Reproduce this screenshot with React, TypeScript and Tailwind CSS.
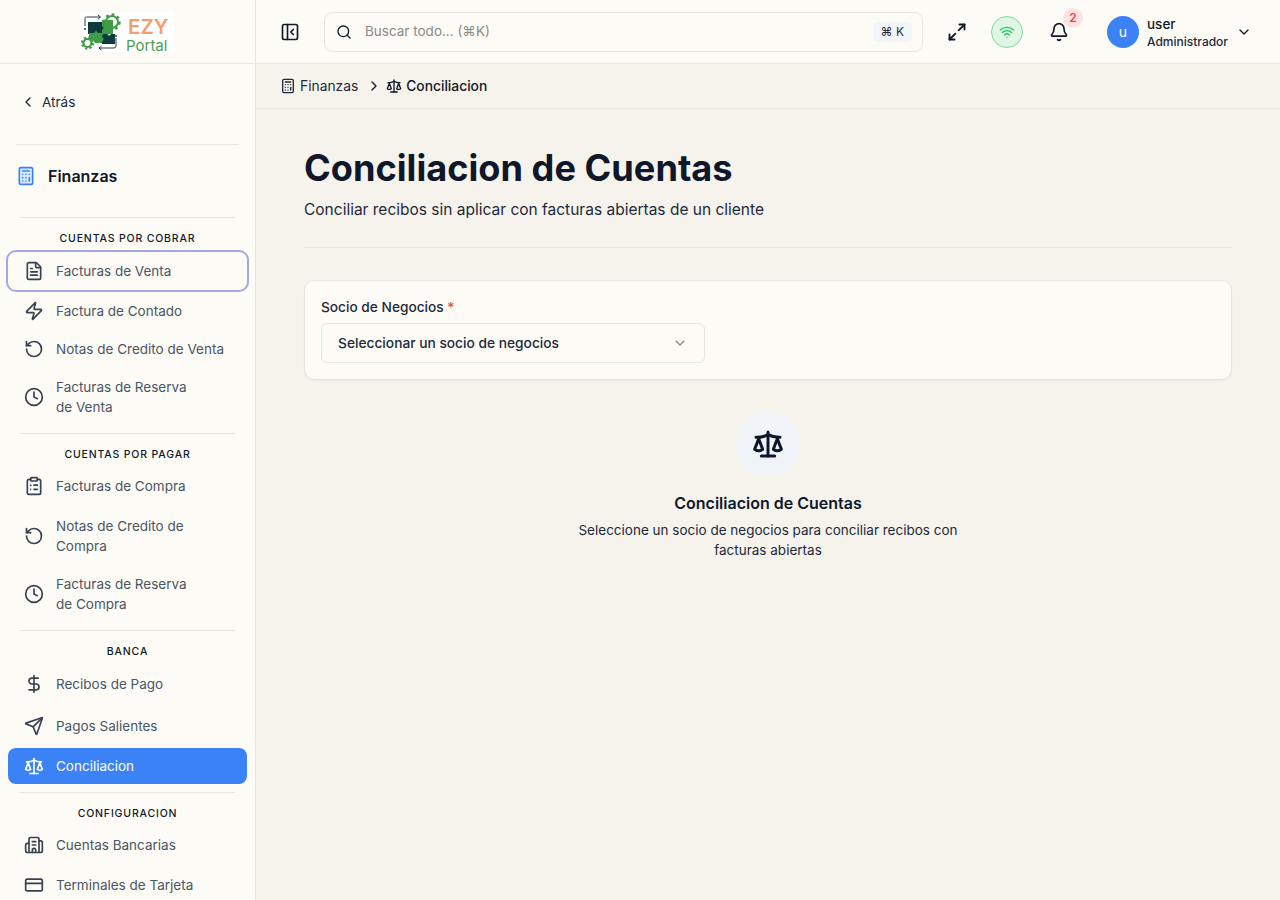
import {
  Bell, Building2, Calculator, ChevronDown, ChevronLeft, ChevronRight, ClipboardList, Clock, CreditCard,
  DollarSign, FileText, Maximize2, PanelLeftClose, RotateCcw, Scale, Search, Send, Wifi, Zap,
} from "lucide-react";

function Logo() {
  const dark = "#0f3b3e";
  const green = "#3f9c46";
  return (
    <div className="flex h-10 w-[94px] items-start bg-white">
      <svg width="46" height="40" viewBox="0 0 46 40" className="shrink-0">
        <g fill="none" stroke="#24403f" strokeWidth="1">
          <path d="M5 14V6.5Q5 5 6.5 5H20M18 3l2.5 2-2.5 2" />
          <path d="M36 26V34Q36 36 34 36H19M21.5 34l-2.5 2 2.5 2" />
        </g>
        <path d="M8 10H23V14Q26 16 23 18V22H18Q16 19 14 22H8Z" fill={dark} />
        <path d="M20 8H33V22H29Q27 25 25 22H22V18Q25 16 22 14V8Z" fill={green} />
        <path d="M9 21H14Q16 17 18 21H23V26Q26 28 23 31H15Q13 27 11 28H9Z" fill={green} />
        <path d="M23 22H27Q29 25 31 22H35V32H22V30Q25 27 22 25Z" fill={dark} />
        <circle cx="32" cy="10" r="6" fill="none" stroke={green} strokeWidth="2" />
        <circle cx="32" cy="10" r="7.5" fill="none" stroke={green} strokeWidth="2.5" strokeDasharray="2.6 3.2" />
        <circle cx="7.5" cy="31" r="4" fill="none" stroke={green} strokeWidth="2.2" />
        <circle cx="7.5" cy="31" r="5.6" fill="none" stroke={green} strokeWidth="2" strokeDasharray="2.2 2.2" />
        <circle cx="36" cy="24" r="1" fill="#24403f" />
        <circle cx="5" cy="17" r="1" fill="#24403f" />
      </svg>
      <div className="flex flex-col pt-[7.5px] font-['Inter',sans-serif]">
        <span className="ml-[2px] text-[20.5px] font-semibold leading-[16px] text-[#ef9f70]">EZY</span>
        <span className="mt-[3.5px] text-[15px] leading-[13px] text-[#4f9d55]">Portal</span>
      </div>
    </div>
  );
}

function Item({ icon: Icon, label, className = "", active = false, focused = false }: any) {
  const tone = active ? "bg-[#3b82f6] text-white" : "text-[#4b5563]";
  const ring = focused ? "ring-2 ring-[#a5a8e8]" : "";
  return (
    <div className={`mx-2 flex items-center gap-3 rounded-lg pl-4 pr-4 text-[13.5px] leading-5 ${tone} ${ring} ${className}`}>
      <Icon className={`h-5 w-5 shrink-0 ${active ? "text-white" : "text-[#374151]"}`} strokeWidth={2} />
      <span className="whitespace-pre-line">{label}</span>
    </div>
  );
}

function Section({ label, className = "" }: { label: string; className?: string }) {
  return (
    <div className={className}>
      <div className="mx-5 border-t border-[#e8e5dc]" />
      <div className="mt-[14px] h-[13px] text-center text-[10.5px] font-medium uppercase leading-[13px] tracking-[0.08em] text-[#111827]">
        {label}
      </div>
    </div>
  );
}

export default function App() {
  return (
    <div className="flex h-[900px] w-[1280px] overflow-hidden bg-[#f5f3ec] font-['Inter',sans-serif] text-[#0f172a]">
      <aside className="w-[256px] shrink-0 overflow-hidden border-r border-[#e8e5dc] bg-[#fcfbf6]">
        <div className="flex h-[64px] items-center justify-center border-b border-[#e8e5dc] pr-[1px]">
          <Logo />
        </div>
        <div className="flex h-[80px] items-start gap-[6px] pl-5 pt-[28px] text-[13.5px] leading-5 text-[#1f2937]">
          <ChevronLeft className="mt-[2px] h-4 w-4" strokeWidth={2} />
          <span>Atrás</span>
        </div>
        <div className="mx-4 border-t border-[#e8e5dc]" />
        <div className="flex h-[62px] items-center gap-3 pl-4 text-base font-semibold">
          <Calculator className="h-5 w-5 fill-[#dbeafe] text-[#3b82f6]" strokeWidth={2} />
          <span>Finanzas</span>
        </div>
        <Section label="Cuentas por cobrar" className="mt-[10px]" />
        <Item icon={FileText} label="Facturas de Venta" focused className="mt-[7px] h-[38px]" />
        <Item icon={Zap} label="Factura de Contado" className="mt-[3px] h-9" />
        <Item icon={RotateCcw} label="Notas de Credito de Venta" className="mt-[2px] h-9" />
        <Item icon={Clock} label={"Facturas de Reserva\nde Venta"} className="mt-[2px] h-[56px]" />
        <Section label="Cuentas por pagar" className="mt-2" />
        <Item icon={ClipboardList} label="Facturas de Compra" className="mt-[7px] h-9" />
        <Item icon={RotateCcw} label={"Notas de Credito de\nCompra"} className="mt-1 h-[56px]" />
        <Item icon={Clock} label={"Facturas de Reserva\nde Compra"} className="mt-[2px] h-[56px]" />
        <Section label="Banca" className="mt-2" />
        <Item icon={DollarSign} label="Recibos de Pago" className="mt-[8px] h-9" />
        <Item icon={Send} label="Pagos Salientes" className="mt-[6px] h-9" />
        <Item icon={Scale} label="Conciliacion" active className="mt-1 h-9" />
        <Section label="Configuracion" className="mt-2" />
        <Item icon={Building2} label="Cuentas Bancarias" className="mt-[7px] h-9" />
        <Item icon={CreditCard} label="Terminales de Tarjeta" className="mt-1 h-9" />
      </aside>

      <div className="flex min-w-0 flex-1 flex-col">
        <header className="flex h-[64px] shrink-0 items-center border-b border-[#e8e5dc] bg-[#fcfbf6] pl-6">
          <PanelLeftClose className="h-5 w-5 shrink-0 text-[#111827]" strokeWidth={2} />
          <div className="ml-6 flex h-10 w-[599px] shrink-0 items-center rounded-lg border border-[#e8e5dc] pl-[11px] pr-[10px]">
            <Search className="h-4 w-4 text-[#111827]" strokeWidth={2} />
            <span className="ml-[13px] flex-1 text-[13.5px] text-[#8a8a86]">Buscar todo... (⌘K)</span>
            <span className="rounded bg-[#f3f6f8] px-2 py-[2px] text-xs leading-4 text-[#1f2937]">⌘ K</span>
          </div>
          <Maximize2 className="ml-6 h-5 w-5 shrink-0 text-[#111827]" strokeWidth={2.25} />
          <div className="ml-6 flex h-8 w-8 shrink-0 items-center justify-center rounded-full border border-[#86d6a0] bg-[#dff5e6]">
            <Wifi className="h-4 w-4 text-[#22c55e]" strokeWidth={2} />
          </div>
          <div className="relative ml-[26px] shrink-0">
            <Bell className="h-5 w-5 text-[#111827]" strokeWidth={2} />
            <span className="absolute -right-[14px] -top-[14px] flex h-5 w-5 items-center justify-center rounded-full bg-[#fde2e2] text-xs font-semibold text-[#ef4444]">2</span>
          </div>
          <div className="ml-[38px] flex h-8 w-8 shrink-0 items-center justify-center rounded-full bg-[#3b82f6] text-sm text-white">u</div>
          <div className="ml-2 flex shrink-0 flex-col pt-[2px]">
            <span className="text-[13.5px] font-medium leading-[18px] text-[#111827]">user</span>
            <span className="mt-[1px] text-xs font-medium leading-[16px] text-[#1f2937]">Administrador</span>
          </div>
          <ChevronDown className="ml-[8px] h-4 w-4 shrink-0 text-[#111827]" strokeWidth={2} />
        </header>

        <nav className="flex h-[45px] shrink-0 items-center border-b border-[#e8e5dc] pl-6 text-[13.8px]">
          <Calculator className="h-4 w-4 text-[#1f2937]" strokeWidth={2} />
          <span className="ml-1 text-[#1f2937]">Finanzas</span>
          <ChevronRight className="ml-2 mr-[4px] h-4 w-4 text-[#111827]" strokeWidth={2} />
          <Scale className="h-4 w-4 text-[#111827]" strokeWidth={2} />
          <span className="ml-1 font-medium text-[#111827]">Conciliacion</span>
        </nav>

        <main className="flex-1 px-12 pt-[36px]">
          <h1 className="text-[36.2px] font-bold leading-[46px] text-[#0f172a]">Conciliacion de Cuentas</h1>
          <p className="mt-[7px] text-[15.5px] leading-6 text-[#1e293b]">Conciliar recibos sin aplicar con facturas abiertas de un cliente</p>
          <div className="mt-[25px] border-t border-[#e8e5dc]" />
          <section className="mt-8 h-[100px] rounded-[10px] border border-[#e8e5dc] bg-[#fcfbf6] px-4 pt-4 shadow-[0_1px_2px_rgba(0,0,0,0.04)]">
            <label className="block text-[13.7px] font-medium leading-5 text-[#1e293b]">
              Socio de Negocios <span className="text-[#ef4444]">*</span>
            </label>
            <div className="mt-[6px] flex h-10 w-[384px] items-center justify-between rounded-md border border-[#e8e5dc] px-4">
              <span className="text-[13.75px] font-medium text-[#1e293b]">Seleccionar un socio de negocios</span>
              <ChevronDown className="h-4 w-4 text-[#8a8a86]" strokeWidth={2} />
            </div>
          </section>
          <div className="mt-8 flex flex-col items-center">
            <div className="flex h-16 w-16 items-center justify-center rounded-full bg-[#f0f4f8]">
              <Scale className="h-8 w-8 text-[#0f172a]" strokeWidth={2.25} />
            </div>
            <h2 className="mt-[15px] text-base font-semibold leading-6 text-[#0f172a]">Conciliacion de Cuentas</h2>
            <p className="mt-[5px] max-w-sm text-center text-[13.5px] leading-5 text-[#1e293b]">
              Seleccione un socio de negocios para conciliar recibos con facturas abiertas
            </p>
          </div>
        </main>
      </div>
    </div>
  );
}
